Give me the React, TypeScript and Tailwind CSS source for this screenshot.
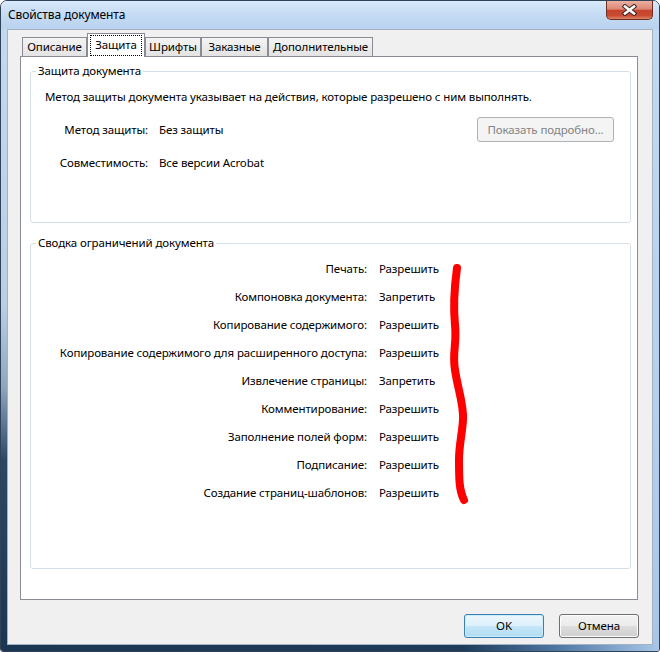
import React from "react";

const rows: [string, string][] = [
  ["Печать:", "Разрешить"],
  ["Компоновка документа:", "Запретить"],
  ["Копирование содержимого:", "Разрешить"],
  ["Копирование содержимого для расширенного доступа:", "Разрешить"],
  ["Извлечение страницы:", "Запретить"],
  ["Комментирование:", "Разрешить"],
  ["Заполнение полей форм:", "Разрешить"],
  ["Подписание:", "Разрешить"],
  ["Создание страниц-шаблонов:", "Разрешить"],
];

function Tabs() {
  return (
    <div className="ml-[2px] flex h-[23px] items-end">
      <div className="flex h-[19px] w-[65px] items-center justify-center border border-b-0 border-[#898c95] bg-[linear-gradient(to_bottom,#f4f4f4,#e3e3e3)]">
        Описание
      </div>
      <div className="relative z-10 -mb-[1px] flex h-[24px] w-[58px] border border-b-0 border-[#898c95] bg-white px-[2px] pt-[1px]">
        <div className="flex h-[21px] flex-1 items-start justify-center border border-dotted border-black pt-[1px]">
          Защита
        </div>
      </div>
      <div className="flex h-[19px] w-[56px] items-center justify-center border border-b-0 border-[#898c95] bg-[linear-gradient(to_bottom,#f4f4f4,#e3e3e3)]">
        Шрифты
      </div>
      <div className="flex h-[19px] w-[67px] items-center justify-center border border-b-0 border-[#898c95] bg-[linear-gradient(to_bottom,#f4f4f4,#e3e3e3)]">
        Заказные
      </div>
      <div className="flex h-[19px] w-[105px] items-center justify-center border border-b-0 border-[#898c95] bg-[linear-gradient(to_bottom,#f4f4f4,#e3e3e3)]">
        Дополнительные
      </div>
    </div>
  );
}

export default function App() {
  return (
    <div className="relative h-[652px] w-[660px] bg-white font-['Noto_Sans',sans-serif] text-[11.5px] leading-[16px] tracking-[-0.12px] text-black">
      <div className="flex h-full w-full flex-col overflow-hidden rounded-t-[7px] rounded-b-[3px] border border-[#2f4257]">
        {/* title bar */}
        <div className="flex h-[28px] shrink-0 items-start justify-between bg-[linear-gradient(to_bottom,#d8e9fa,#c3daf2_55%,#b9d2ee)]">
          <span className="pl-[7px] pt-[6px] text-[12px]">Свойства документа</span>
          <div className="mr-[6px] flex h-[19px] w-[47px] items-center justify-center rounded-b-[5px] border border-t-0 border-[#6e2e22] bg-[linear-gradient(to_bottom,#eab0a2_0%,#dc8773_45%,#c7442c_52%,#c94a31_80%,#dd8467_100%)]">
            <svg width="15" height="12" viewBox="0 0 15 12">
              <path d="M3 2.5 L12 9.5 M12 2.5 L3 9.5" stroke="#3d2a28" strokeWidth="4.6" strokeLinecap="square" />
              <path d="M3 2.5 L12 9.5 M12 2.5 L3 9.5" stroke="#ffffff" strokeWidth="2.6" strokeLinecap="square" />
            </svg>
          </div>
        </div>

        {/* middle */}
        <div className="flex h-[616px] shrink-0">
          <div className="w-[6px] bg-[linear-gradient(to_bottom,#c3d9f1_0%,#b9cfe6_45%,#8ea7c1_58%,#2a4866_70%,#1b3652_100%)]" />
          <div className="flex w-[646px] flex-col border border-[#a2b2c3] bg-[#f0f0f0]">
            <div className="flex flex-col pl-[12px] pt-[3px]">
              <Tabs />
              <div className="h-[544px] w-[618px] border border-[#898c95] bg-white pl-[9px]">
                {/* group 1 */}
                <fieldset className="mt-[6px] h-[160px] w-[601px] rounded-[3px] border border-[#d5dfe5]">
                  <legend className="ml-[5px] px-[2px] leading-[16px]">Защита документа</legend>
                  <div className="pl-[14px]">
                    <div className="pt-[10px]">
                      Метод защиты документа указывает на действия, которые разрешено с ним выполнять.
                    </div>
                    <div className="mt-[12px] flex h-[25px] items-center">
                      <span className="w-[103px] text-right">Метод защиты:</span>
                      <span className="ml-[11px]">Без защиты</span>
                      <div className="ml-auto mr-[16px] flex h-[25px] w-[137px] items-center justify-center rounded-[3px] border border-[#adb2b5] bg-[#f4f4f4] text-[#838383]">
                        Показать подробно...
                      </div>
                    </div>
                    <div className="mt-[13px] flex h-[16px] items-center">
                      <span className="w-[103px] text-right">Совместимость:</span>
                      <span className="ml-[11px]">Все версии Acrobat</span>
                    </div>
                  </div>
                </fieldset>

                {/* group 2 */}
                <fieldset className="mt-[12px] h-[334px] w-[601px] rounded-[3px] border border-[#d5dfe5]">
                  <legend className="ml-[5px] px-[2px] leading-[16px]">Сводка ограничений документа</legend>
                  <div className="grid auto-rows-[28px] grid-cols-[336px_auto] items-center gap-x-[12px] pt-[4px]">
                    {rows.map(([k, v]) => (
                      <React.Fragment key={k}>
                        <span className="text-right">{k}</span>
                        <span>{v}</span>
                      </React.Fragment>
                    ))}
                  </div>
                </fieldset>
              </div>
            </div>
            <div className="mt-[14px] flex justify-end gap-[15px] pr-[13px]">
              <div className="flex h-[24px] w-[80px] items-center justify-center rounded-[3px] border border-[#3c7fb1] bg-[linear-gradient(to_bottom,#ecf7fd_0%,#dcf0fb_50%,#c4e6f7_52%,#b2dcf3_100%)] shadow-[inset_0_0_0_1px_#c9ecfb]">
                OK
              </div>
              <div className="flex h-[24px] w-[80px] items-center justify-center rounded-[3px] border border-[#707070] bg-[linear-gradient(to_bottom,#f3f3f3_0%,#ebebeb_50%,#dddddd_52%,#cfcfcf_100%)] shadow-[inset_0_0_0_1px_#fcfcfc]">
                Отмена
              </div>
            </div>
          </div>
          <div className="w-[6px] bg-[linear-gradient(to_bottom,#c3d9f1,#b6d0ec_60%,#a8c6e8)]" />
        </div>

        {/* bottom frame */}
        <div className="flex-1 bg-[linear-gradient(to_right,#1b3652_0%,#1e3b5a_70%,#4f79a5_85%,#a9c7e8_100%)]" />
      </div>

      {/* red marker line */}
      <svg className="pointer-events-none absolute left-0 top-0" width="660" height="652">
        <path
          d="M457 268 C 454 290, 453 305, 455 325 C 457 345, 452 352, 455 370 C 458 390, 464 405, 463 420 C 462 435, 459 445, 459 460 C 459 478, 459 490, 464 500"
          fill="none"
          stroke="#ff0000"
          strokeWidth="8"
          strokeLinecap="round"
        />
      </svg>
    </div>
  );
}
